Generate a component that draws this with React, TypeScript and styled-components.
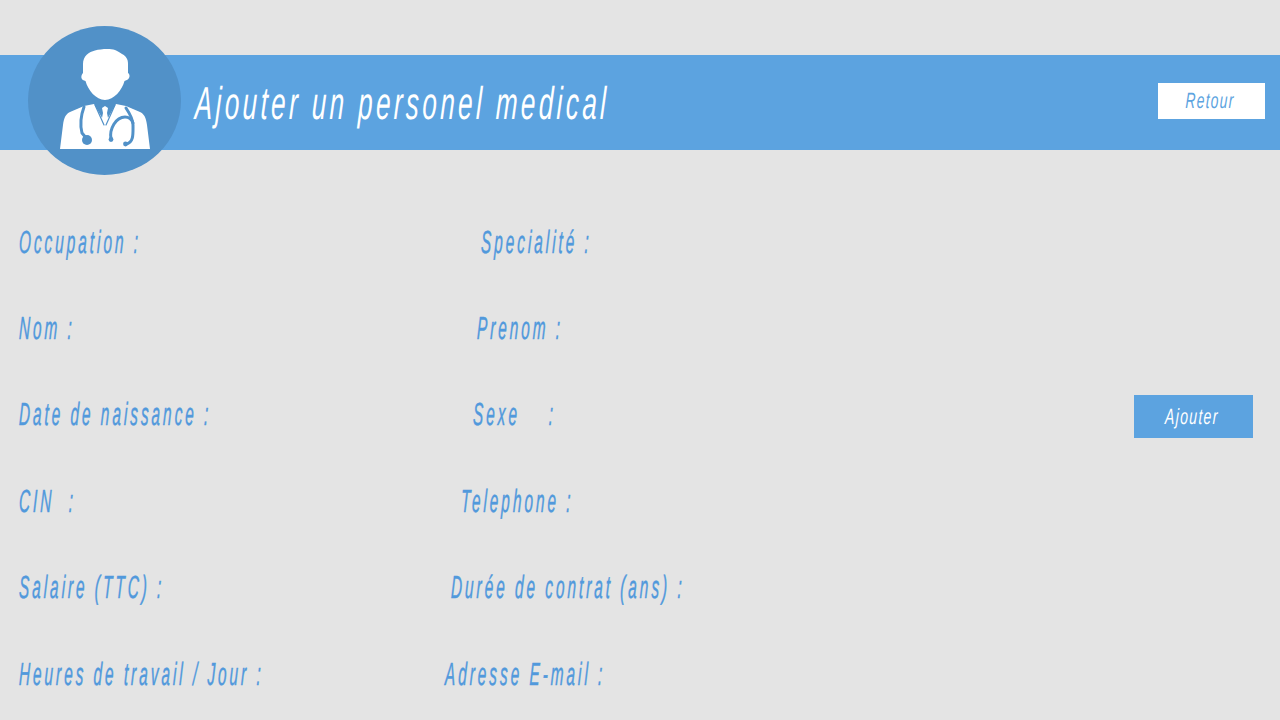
import React from "react";
import styled, { createGlobalStyle } from "styled-components";

const Global = createGlobalStyle`
  html, body {
    margin: 0;
    padding: 0;
    background: #e4e4e4;
    overflow: hidden;
  }
`;

const fontStack = `"Liberation Sans", Arial, sans-serif`;

const Page = styled.div`
  width: 1280px;
  height: 720px;
  display: flex;
  flex-direction: column;
  font-family: ${fontStack};
  font-style: italic;
`;

const Header = styled.header`
  position: relative;
  margin-top: 55px;
  height: 95px;
  background: #5ca3e0;
  display: flex;
  align-items: center;
  justify-content: space-between;
  padding: 0 15px 0 195px;
  flex-shrink: 0;
`;

const Avatar = styled.div`
  position: absolute;
  left: 28px;
  top: -29px;
  width: 153px;
  height: 149px;
  border-radius: 50%;
  background: #5191c8;
  display: flex;
  align-items: center;
  justify-content: center;
`;

// the font of the screenshot is very condensed, so the text is squeezed
const Squeezed = styled.span<{ $scale: number; $origin?: string }>`
  display: inline-block;
  white-space: pre;
  transform: scaleX(${({ $scale }) => $scale}) skewX(-3deg);
  transform-origin: ${({ $origin }) => $origin || "left"} center;
`;

const Title = styled.h1`
  margin: 0;
  color: #fff;
  font-size: 46px;
  font-weight: 400;
  letter-spacing: 6px;
  line-height: 1;
`;

const BackButton = styled.button`
  width: 107px;
  height: 36px;
  margin-top: -3px;
  border: 0;
  padding: 0 3px 0 0;
  background: #fff;
  color: #5ca3e0;
  font: italic 400 22px ${fontStack};
  letter-spacing: 2px;
`;

const Form = styled.form`
  display: flex;
  flex-direction: column;
  padding: 49px 27px 0 19px;
`;

const Row = styled.div`
  height: 86.4px;
  display: flex;
  align-items: center;
`;

const Field = styled.div<{ $width: number }>`
  width: ${({ $width }) => $width}px;
  flex-shrink: 0;
`;

const Label = styled.label`
  color: #5199dc;
  font-size: 32px;
  font-weight: 400;
  letter-spacing: 6.2px;
  -webkit-text-stroke: 0.5px #5199dc;
`;

const SubmitButton = styled.button`
  width: 119px;
  height: 43px;
  margin-left: auto;
  margin-top: 4px;
  border: 0;
  padding: 0 3px 0 0;
  background: #5ca3e0;
  color: #fff;
  font: italic 400 22px ${fontStack};
  letter-spacing: 2px;
`;

const rows = [
  ["Occupation :", "Specialité :", 462],
  ["Nom :", "Prenom :", 458],
  ["Date de naissance :", "Sexe    :", 454],
  ["CIN  :", "Telephone :", 442],
  ["Salaire (TTC) :", "Durée de contrat (ans) :", 432],
  ["Heures de travail / Jour :", "Adresse E-mail :", 426],
] as const;

const DoctorIcon = () => (
  <svg width="90" height="100" viewBox="0 0 90 100" style={{ marginBottom: 4 }}>
    <path
      fill="#fff"
      d="M23 15C23 7 29 3 35 1.500C41 0 50-.5 55 1C58 2 60 4 62 5C66 7 68 10 68 15L68 24C69.500 25 70 27 69 29C68 31 66 31.500 64.500 32C62 41 54 51 45 51C36 51 28 41 25.500 32C23.500 31.500 22 31 21.500 29C21 27 22 25 23 24Z"
    />
    <path
      fill="#fff"
      d="M0 100L3 76C4 68 6 65 10 63L24 57L34 55L45 74L56 55L66 57L80 63C84 65 86 68 87 76L90 100Z"
    />
    <path fill="#fff" d="M42 59L45 57L48 59L47 64L49 74L45 80L41 74L43 64Z" />
    <g fill="none" stroke="#5191c8" strokeLinecap="round">
      <path strokeWidth="3" d="M24 58C21 66 20 76 22 84L27 90" />
      <path strokeWidth="1.2" d="M35 56L44 76M55 56L46 76" />
      <path strokeWidth="3" d="M66 59C70 65 73 70 73 76C73 84 74 94 66 95" />
      <path strokeWidth="3" d="M51 90C49 80 56 68 65 68C69 68 72 71 73 74" />
    </g>
    <circle cx="27" cy="91" r="5" fill="#5191c8" />
    <circle cx="51" cy="90.500" r="2.400" fill="#5191c8" />
    <circle cx="65.500" cy="95" r="2.400" fill="#5191c8" />
  </svg>
);

export default function App() {
  return (
    <Page>
      <Global />
      <Header>
        <Avatar>
          <DoctorIcon />
        </Avatar>
        <Title>
          <Squeezed $scale={0.566}>Ajouter un personel medical</Squeezed>
        </Title>
        <BackButton type="button">
          <Squeezed $scale={0.63} $origin="center">Retour</Squeezed>
        </BackButton>
      </Header>
      <Form>
        {rows.map(([first, second, col], i) => (
          <Row key={first}>
            <Field $width={col}>
              <Label>
                <Squeezed $scale={0.48}>{first}</Squeezed>
              </Label>
            </Field>
            <Field $width={0}>
              <Label>
                <Squeezed $scale={0.48}>{second}</Squeezed>
              </Label>
            </Field>
            {i === 2 && (
              <SubmitButton type="button">
                <Squeezed $scale={0.64} $origin="center">Ajouter</Squeezed>
              </SubmitButton>
            )}
          </Row>
        ))}
      </Form>
    </Page>
  );
}
